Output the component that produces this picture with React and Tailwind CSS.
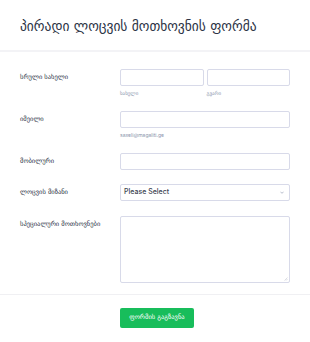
import React from "react";

const geo = { fontFamily: '"DejaVu Sans", "Noto Sans", sans-serif' };
const inter = { fontFamily: 'Inter, "Liberation Sans", sans-serif' };

function Label({ children }) {
  return (
    <div className="w-[100px] shrink-0 text-[6.5px] leading-[17px] text-[#2c3345]" style={geo}>
      {children}
    </div>
  );
}

function Input({ className = "" }) {
  return <div className={"h-[17px] rounded-[2px] border border-[#d8dae9] bg-white " + className} />;
}

function Sub({ children, font = geo }) {
  return (
    <div className="mt-[3px] h-[8px] text-[5px] leading-[8px] text-[#8894ab]" style={font}>
      {children}
    </div>
  );
}

export default function App() {
  return (
    <div className="w-[310px] h-[342px] bg-white overflow-hidden">
      <div className="h-[52px] border-b-2 border-[#f3f3f6] px-[20px] pt-[16px]">
        <div className="text-[13.5px] leading-[20px] text-[#2c3345]" style={geo}>
          პირადი ლოცვის მოთხოვნის ფორმა
        </div>
      </div>

      <div className="px-[20px]">
        <div className="mt-[17px] flex">
          <Label>სრული სახელი</Label>
          <div className="flex flex-1 gap-[3px]">
            <div className="flex-1">
              <Input />
              <Sub>სახელი</Sub>
            </div>
            <div className="flex-1">
              <Input />
              <Sub>გვარი</Sub>
            </div>
          </div>
        </div>

        <div className="mt-[14px] flex">
          <Label>იმეილი</Label>
          <div className="flex-1">
            <Input />
            <Sub font={inter}>saxeli@magaliti.ge</Sub>
          </div>
        </div>

        <div className="mt-[14px] flex">
          <Label>მობილური</Label>
          <div className="flex-1">
            <Input />
          </div>
        </div>

        <div className="mt-[14px] flex">
          <Label>ლოცვის მიზანი</Label>
          <div className="flex-1">
            <div className="h-[17px] rounded-[2px] border border-[#d8dae9] bg-white flex items-center justify-between px-[3px]">
              <span className="text-[7px] font-medium text-[#3a3f50]" style={inter}>Please Select</span>
              <svg width="4" height="3" viewBox="0 0 10 6" className="mr-[2px]">
                <path d="M1 1l4 4 4-4" fill="none" stroke="#8894ab" strokeWidth="1.5" />
              </svg>
            </div>
          </div>
        </div>

        <div className="mt-[15px] flex">
          <Label>სპეციალური მოთხოვნები</Label>
          <div className="flex-1">
            <div className="relative h-[67px] rounded-[2px] border border-[#d8dae9] bg-white">
              <svg width="4" height="4" viewBox="0 0 8 8" className="absolute right-[1px] bottom-[1px]">
                <path d="M7 1L1 7M7 4L4 7" stroke="#b8bdc9" strokeWidth="1" />
              </svg>
            </div>
          </div>
        </div>
      </div>

      <div className="mt-[11px] h-px bg-[#f0f0f3]" />

      <div className="mt-[13px] pl-[120px]">
        <div
          className="flex h-[20px] w-[74px] items-center justify-center rounded-[2px] bg-[#18bd5b] text-[6.5px] text-white"
          style={geo}
        >
          ფორმის გაგზავნა
        </div>
      </div>
    </div>
  );
}
